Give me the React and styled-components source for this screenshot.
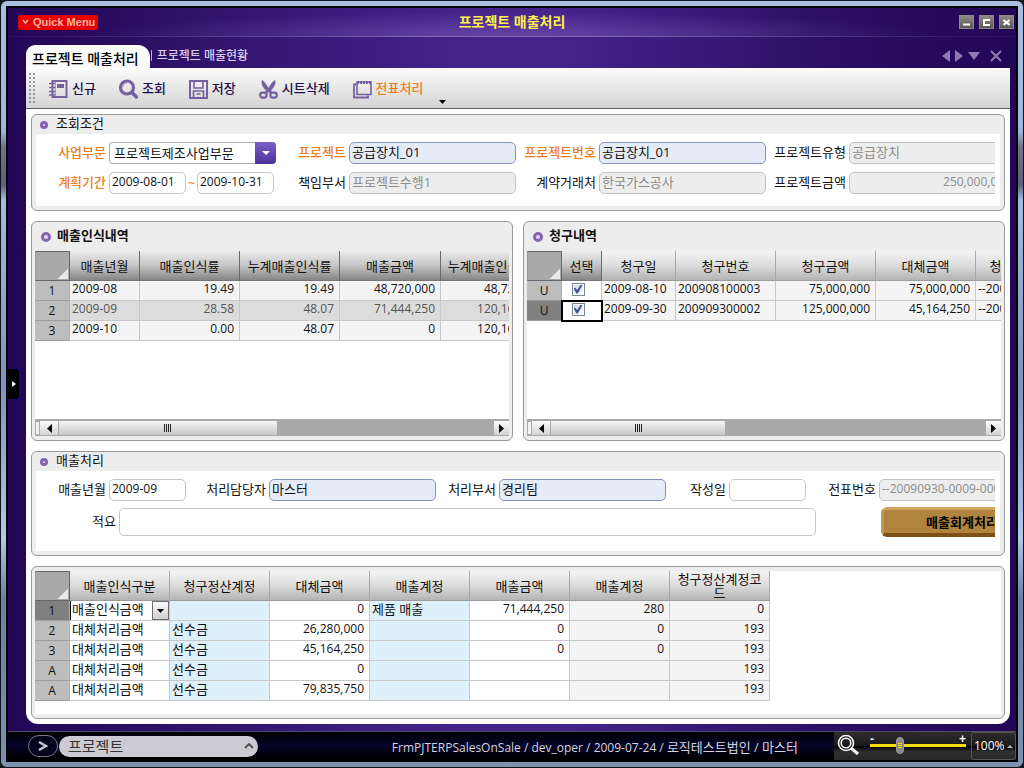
import React from "react"
import styled, { createGlobalStyle } from "styled-components"

const GlobalStyle = createGlobalStyle`
  * {
    box-sizing: border-box;
  }
  body {
    margin: 0;
    background: #10151f;
    color: #111;
    font: 13px/16px "Open Sans", "Noto Sans CJK KR", sans-serif;
  }
  button, input, select {
    font: inherit;
    color: inherit;
  }
`

/* window frame */

const Frame = styled.div`
  min-height: 100vh;
  padding: 1px;
  display: flex;
`

const Glass = styled.div`
  flex: 1;
  min-width: 0;
  display: flex;
  padding: 5px;
  border-radius: 6px;
  background: linear-gradient(#a9bfe0 0, #9fb6da 17%, #6f7486 19%, #5b5f78 24%, #a4bbdd 26%, #7f93b6 50%, #b4c8e4 70%, #6c7f9c 78%, #7d92ae 100%);
`

const Window = styled.div`
  flex: 1;
  min-width: 0;
  display: flex;
  flex-direction: column;
  border: 2px solid #05040c;
  background: linear-gradient(90deg, #230656, #2d1066 15%, #45238a 45%, #45238a 55%, #2d1066 80%, #230656);
`

const TitleBar = styled.header`
  height: 29px;
  padding: 0 2px;
  display: grid;
  grid-template-columns: 1fr auto 1fr;
  align-items: center;
  border-bottom: 1px solid #6a4da0;
  border-image: linear-gradient(90deg, #2a0d62, #8068b4 40%, #8068b4 60%, #2a0d62) 1;
  background: radial-gradient(ellipse 420px 24px at 50% 100%, rgba(130, 100, 190, 0.5), transparent);
`

const Title = styled.h1`
  margin: 0;
  font-size: 14px;
  line-height: 20px;
  color: #fff04a;
`

const QuickMenu = styled.button`
  justify-self: start;
  height: 15px;
  margin-left: 8px;
  padding: 0 3px 0 4px;
  display: flex;
  align-items: center;
  gap: 4px;
  border: 0;
  border-radius: 2px;
  background: #e60000;
  color: #ffb4a0;
  font: bold 11px/15px "Liberation Sans", sans-serif;
`

const WindowButtons = styled.div`
  justify-self: end;
  display: flex;
  gap: 5px;
`

const WindowButton = styled.button`
  width: 15px;
  height: 14px;
  padding: 0;
  display: flex;
  align-items: center;
  justify-content: center;
  border: 1px solid #8c8a80;
  background: linear-gradient(#8a8880, #5c5a56);
`

const Body = styled.div`
  flex: 1;
  display: flex;
`

const Gutter = styled.div`
  width: ${props => props.$width}px;
  flex: none;
  display: flex;
  align-items: center;
`

const SideHandle = styled.button`
  width: 11px;
  height: 30px;
  padding: 0 0 0 4px;
  border: 0;
  border-radius: 0 4px 4px 0;
  background: #000;
  display: flex;
  align-items: center;
`

const Main = styled.main`
  flex: 1;
  min-width: 0;
  display: flex;
  flex-direction: column;
  margin-bottom: 7px;
`

/* document tabs */

const TabBar = styled.nav`
  height: 31px;
  padding-right: 8px;
  display: flex;
  align-items: flex-end;
`

const Tab = styled.button`
  height: ${props => (props.$active ? 23 : 24)}px;
  padding: ${props => (props.$active ? "4px 11px 0 6px" : "0 6px 0 4px")};
  border: 0;
  border-radius: ${props => (props.$active ? "9px 12px 0 0" : "0")};
  background: ${props => (props.$active ? "#fafafa" : "none")};
  color: ${props => (props.$active ? "#000" : "#d8cdf0")};
  font-size: ${props => (props.$active ? 14 : 12)}px;
  font-weight: 500;
  line-height: 18px;
`

const TabDivider = styled.span`
  width: 1px;
  height: 11px;
  margin: 0 1px 7px;
  background: #b9a8de;
`

const TabTools = styled.div`
  margin-left: auto;
  height: 24px;
  padding-bottom: 1px;
  display: flex;
  align-items: center;
  gap: 5px;
  color: #8f7bb5;
`

const IconButton = styled.button`
  padding: 0;
  border: 0;
  background: none;
  display: flex;
  color: inherit;
  margin-left: ${props => props.$space || 0}px;
`

const Sheet = styled.div`
  flex: 1;
  display: flex;
  flex-direction: column;
  border-radius: 0 0 12px 12px;
  background: #fff;
`

const Toolbar = styled.div`
  height: 41px;
  padding-left: 3px;
  display: flex;
  align-items: center;
  gap: 22px;
  border-top: 1px solid #fff;
  border-bottom: 1px solid #5f5f5f;
  background: linear-gradient(#fafafa, #d4d4d4);
`

const Grip = styled.span`
  width: 7px;
  height: 31px;
  margin-right: -10px;
  background: radial-gradient(circle at 1px 1px, #999 1px, transparent 1px) 0 0 / 4px 4px;
`

const ToolButton = styled.button`
  height: 26px;
  padding: 0;
  display: flex;
  align-items: center;
  gap: 4px;
  border: 0;
  background: none;
  color: ${props => (props.$accent ? "#ee7d1b" : "#1d0f4d")};
  font-weight: 500;
  line-height: 20px;

  > span {
    padding-bottom: 2px;
  }

  > svg {
    color: #75609f;
  }
`

const MoreButton = styled.button`
  align-self: flex-end;
  padding: 0 0 4px;
  margin-left: -6px;
  border: 0;
  background: none;
  display: flex;
`

const Content = styled.div`
  flex: 1;
  padding: 5px;
  display: flex;
  flex-direction: column;
  gap: 10px;
`

/* panels */

const Panel = styled.section`
  min-width: 0;
  min-height: ${props => props.$minHeight || 0}px;
  display: flex;
  flex-direction: column;
  border: 1px solid #999;
  border-radius: 6px;
  background: #ededed;
`

const PanelHeader = styled.h2`
  margin: 0;
  height: ${props => (props.$tall ? 29 : 19)}px;
  padding-left: ${props => (props.$tall ? 9 : 8)}px;
  display: flex;
  align-items: center;
  gap: 6px;
  font-size: 13px;
  font-weight: ${props => (props.$tall ? 600 : 400)};

  > span:last-child {
    padding-bottom: 4px;
  }
`

const Ring = styled.span`
  width: ${props => props.$size}px;
  height: ${props => props.$size}px;
  margin-right: ${props => 10 - props.$size}px;
  border: 3px solid #8464b0;
  border-radius: 50%;
  background: #e6dcf4;
`

const PanelBody = styled.div`
  margin: 0 4px 4px;
  padding: 8px 5px ${props => props.$bottom}px;
  background: #fff;
`

const Form = styled.form`
  overflow: hidden;
  display: flex;
  flex-direction: column;
  gap: ${props => props.$gap}px;
`

const FormRow = styled.div`
  display: grid;
  grid-template-columns: ${props => props.$columns};
  column-gap: 3px;
  align-items: center;
`

const Label = styled.label`
  padding-bottom: 2px;
  text-align: right;
  white-space: nowrap;
  color: ${props => (props.$required ? "#ee7d1b" : "#111")};
  font-weight: ${props => (props.$required ? 500 : 400)};
`

const tones = {
  plain: { background: "#fff", border: "#c4c4cc", color: "#111" },
  lookup: { background: "#e6ebf8", border: "#8592bd", color: "#111" },
  locked: { background: "#ededed", border: "#c2c2c2", color: "#8c8c8c" },
}

const TextInput = styled.input`
  width: 100%;
  min-width: 0;
  height: ${props => (props.$tall ? 28 : 22)}px;
  padding: 0 4px 3px 2px;
  border: 1px solid ${props => tones[props.$tone || "plain"].border};
  border-radius: 5px;
  outline: 0;
  background: ${props => tones[props.$tone || "plain"].background};
  color: ${props => tones[props.$tone || "plain"].color};
  font-size: ${props => (props.$numeric ? 12 : 13)}px;
  text-align: ${props => props.$align || "left"};
`

const Period = styled.div`
  display: grid;
  grid-template-columns: 77px 11px 77px;
  align-items: center;
  color: #ee7d1b;
  text-align: center;
`

const SelectBox = styled.div`
  height: 22px;
  display: grid;
  grid-template-columns: 1fr 21px;
  border: 1px solid #a9a9b8;
  border-right: 0;
  border-radius: 4px;

  > select {
    grid-area: 1 / 1 / 2 / 3;
    min-width: 0;
    padding: 0 0 0 4px;
    appearance: none;
    border: 0;
    outline: 0;
    background: none;
    line-height: 20px;
  }

  > span {
    grid-area: 1 / 2;
    margin: -1px 0;
    pointer-events: none;
    display: flex;
    align-items: center;
    justify-content: center;
    border-radius: 0 4px 4px 0;
    background: linear-gradient(#7a5fc4, #4d329c);
  }
`

const PostButton = styled.button`
  width: 160px;
  height: 30px;
  margin-left: 62px;
  padding: 0;
  border: 1px solid #9a6f2c;
  border-top: 3px solid #d3a25c;
  border-bottom: 4px solid #7d5216;
  border-left: 3px solid #c8964e;
  border-radius: 6px;
  background: #b0843f;
  color: #000;
  font-weight: 600;
`

const Split = styled.div`
  flex: 1 0 220px;
  display: grid;
  grid-template-columns: 1fr 1fr;
  gap: 10px;
`

/* grids */

const GridBox = styled.div`
  flex: 1;
  min-width: 0;
  margin: ${props => (props.$top || 0)}px 3px 4px;
  display: flex;
  flex-direction: column;
  overflow: hidden;
  background: #fff;
`

const GridScroll = styled.div`
  flex: 1;
  overflow: hidden;
`

const Table = styled.table`
  width: ${props => props.$width}px;
  table-layout: fixed;
  border-collapse: separate;
  border-spacing: 0;
`

const HeadCell = styled.th`
  height: 30px;
  padding: ${props => (props.$wrap ? "0 6px" : "0")};
  border-right: 1px solid ${props => (props.$dark ? "#6c6c6c" : "#a8a8a8")};
  border-bottom: 1px solid ${props => (props.$dark ? "#777" : "#9c9c9c")};
  background: ${props => (props.$dark
    ? "linear-gradient(#ececec, #c4c4c4 50%, #868686)"
    : "linear-gradient(#f4f4f4, #dcdcdc 50%, #b4b4b4)")};
  font-weight: 400;
  line-height: ${props => (props.$wrap ? 14 : 16)}px;
  white-space: ${props => (props.$wrap ? "normal" : "nowrap")};
  word-break: break-all;
`

const CornerCell = styled.th`
  height: 30px;
  padding: 0;
  border: 1px solid #666;
  border-left-color: #999;
  background: linear-gradient(135deg, #a9a9a9 50%, #e8e8e8 51%) right 1px bottom 1px / 11px 11px no-repeat, #a9a9a9;
`

const RowHead = styled.th`
  height: 20px;
  padding: 0;
  border-right: 1px solid #b0b0b0;
  border-bottom: 1px solid #9c9c9c;
  background: ${props => (props.$current ? "#808080" : "#bdbdbd")};
  font-size: 12px;
  font-weight: 400;
`

const fills = {
  gray: "#f4f4f4",
  selected: "#dcdcdc",
  blue: "#def0fa",
  white: "#fff",
}

const Cell = styled.td`
  height: 20px;
  padding: ${props => (props.$flush ? "0" : "0 5px 3px 2px")};
  border-right: 1px solid #c8c8c8;
  border-bottom: 1px solid #c8c8c8;
  background: ${props => fills[props.$fill || "gray"]};
  color: ${props => (props.$fill === "selected" ? "#555" : "#111")};
  font-size: ${props => (props.$text ? 13 : 12)}px;
  text-align: ${props => props.$align || "left"};
  white-space: nowrap;
  overflow: hidden;
  ${props => props.$focus && `
    outline: 2px solid #000;
    outline-offset: -1px;
  `}
`

const CheckBox = styled.input`
  appearance: none;
  width: 13px;
  height: 13px;
  margin: 0 7px 0 0;
  display: inline-flex;
  vertical-align: top;
  border: 1px solid #7b8594;
  background: linear-gradient(135deg, #cdd3dc, #fff);
  box-shadow: inset 0 0 0 1px #fff;

  &:checked::after {
    content: "";
    width: 9px;
    height: 9px;
    margin: 1px;
    background: #43539c;
    clip-path: polygon(0 45%, 20% 35%, 40% 62%, 80% 0, 100% 5%, 48% 100%, 34% 100%);
  }
`

const CellSelect = styled.div`
  height: 19px;
  display: grid;
  grid-template-columns: 1fr 17px;
  border-left: 1px solid #000;

  > select {
    grid-area: 1 / 1 / 2 / 3;
    min-width: 0;
    padding: 0 0 3px 1px;
    appearance: none;
    border: 0;
    outline: 0;
    background: none;
    line-height: 16px;
  }

  > span {
    grid-area: 1 / 2;
    pointer-events: none;
    display: flex;
    align-items: center;
    justify-content: center;
    border: 1px solid #6d6d6d;
    background: linear-gradient(#fafafa, #cfcfcf);
  }
`

const ScrollBar = styled.div`
  height: 17px;
  display: flex;
  border-top: 2px solid #a8a8a8;
  border-bottom: 1px solid #a8a8a8;
  background: #a9a9a9;
`

const SplitGrip = styled.span`
  width: 5px;
  flex: none;
  border: 1px solid #aaa;
  background: #f2f2f2;
`

const ScrollArrow = styled.button`
  width: ${props => props.$width}px;
  padding: 0;
  flex: none;
  display: flex;
  align-items: center;
  justify-content: center;
  border: 0;
  background: linear-gradient(#fcfcfc, #d2d2d2);
`

const ScrollTrack = styled.div`
  flex: 1;
  padding-left: 1px;
  display: flex;
`

const ScrollThumb = styled.div`
  width: ${props => props.$size}%;
  display: flex;
  align-items: center;
  justify-content: center;
  background: linear-gradient(#f4f4f4, #c8c8c8);
`

const ThumbGrip = styled.span`
  width: 7px;
  height: 8px;
  background: repeating-linear-gradient(90deg, #222 0 1px, transparent 1px 2px);
`

/* status bar */

const StatusBar = styled.footer`
  height: 29px;
  padding-left: 20px;
  display: flex;
  align-items: center;
  border-top: 1px solid #4d4d66;
  background: linear-gradient(#000, #05042a 50%, #000 90%);
`

const RoundButton = styled.button`
  width: 30px;
  height: 22px;
  padding: 0;
  display: flex;
  align-items: center;
  justify-content: center;
  border: 1px solid #77778a;
  border-radius: 11px;
  background: #05041c;
`

const ModuleButton = styled.button`
  width: 199px;
  height: 21px;
  margin-left: 1px;
  padding: 0 4px 0 9px;
  display: flex;
  align-items: center;
  justify-content: space-between;
  border: 0;
  border-radius: 11px;
  background: #cbcbd1;
  color: #333;
  font-size: 15px;
  line-height: 20px;
`

const StatusText = styled.p`
  margin: 3px 36px 0 auto;
  color: #d4d4dc;
  font-size: 12px;
  white-space: nowrap;

  > span {
    font-size: 13px;
  }
`

const ZoomArea = styled.div`
  height: 28px;
  padding-left: 2px;
  display: flex;
  align-items: center;
  background: linear-gradient(#2c2c2c, #1c1c1c 48%, #000 50%, #2e2e2e 70%, #2a2a2a);
`

const ZoomSlider = styled.div`
  width: 96px;
  margin: 0 5px 2px 10px;
  display: grid;
  grid-template-columns: 1fr 1fr;
  color: #fff;
  font: bold 12px/6px "Liberation Sans", sans-serif;

  > span:nth-child(2) {
    text-align: right;
  }

  > input {
    grid-column: 1 / 3;
    width: 96px;
    height: 17px;
    margin: -5px 0 0;
    appearance: none;
    background: linear-gradient(#f5dc00, #f5dc00) center / 100% 3px no-repeat;
  }

  > input::-webkit-slider-thumb {
    appearance: none;
    width: 8px;
    height: 17px;
    border: 1px solid #999;
    border-radius: 4px;
    background: repeating-linear-gradient(#f5dc00 0 1px, transparent 1px 2px) center / 4px 5px no-repeat, #8a8a8a;
  }
`

const ZoomValue = styled.button`
  width: 45px;
  height: 28px;
  padding: 0 2px;
  display: flex;
  align-items: center;
  justify-content: space-between;
  border: 1px solid #565656;
  border-radius: 3px;
  background: none;
  color: #fff;
  font-size: 12px;
`

const icons = {
  create: (
    <g fill="none" stroke="currentColor">
      <path d="M4.5 2h14v16h-14z" strokeWidth="2" />
      <path d="M9 5h7v4H9z" fill="currentColor" stroke="none" />
      <path d="M1 4.5h6M1 8.5h6M1 12.5h6M1 16h6" strokeWidth="1.6" />
      <path d="M7.5 2v16" strokeWidth="1" opacity="0.6" />
    </g>
  ),
  search: (
    <g fill="none" stroke="currentColor">
      <circle cx="9" cy="8.5" r="6.5" strokeWidth="3.2" />
      <path d="M13.5 13l6 6" strokeWidth="3.6" />
      <path d="M5 8a4 4 0 0 1 4-4" stroke="#b7a7d6" strokeWidth="1" />
    </g>
  ),
  save: (
    <g fill="none" stroke="currentColor">
      <path d="M2 2h17v17H2z" strokeWidth="2" />
      <path d="M6 2.5V9h9V2.5M5.5 18v-6h10v6M8.5 15h4" strokeWidth="1.6" />
    </g>
  ),
  cut: (
    <g>
      <path
        d="M4 1c2 1 5 5 6.5 8C12 6 15 2 17 1c1.5 3-.5 7-4 10.500l2 2.500-2.500 1-2-2-2 2L6 14l2-2.500C4.500 8 2.500 4 4 1z"
        fill="currentColor"
      />
      <g fill="none" stroke="currentColor" strokeWidth="2.2">
        <rect x="2.2" y="13.6" width="6.4" height="5" rx="2.3" />
        <rect x="12.4" y="13.6" width="6.4" height="5" rx="2.3" />
      </g>
    </g>
  ),
  slip: (
    <g fill="none" stroke="currentColor">
      <path d="M5 3h14v12.5H5z" strokeWidth="1.6" />
      <path d="M4 5.5H2v13h14v-2" strokeWidth="1.8" />
      <path d="M5 3.5h14" strokeWidth="3" strokeDasharray="2 1" />
    </g>
  ),
}

const ToolIcon = ({ name }) => (
  <svg width="20" height="20" viewBox="0 0 20 20" aria-hidden="true">
    {icons[name]}
  </svg>
)

const Triangle = ({ points, width, height, color = "currentColor" }) => (
  <svg width={width} height={height} aria-hidden="true">
    <polygon points={points} fill={color} />
  </svg>
)

const Stroke = ({ d, width, height, color, weight = 2 }) => (
  <svg width={width} height={height} aria-hidden="true">
    <path d={d} fill="none" stroke={color} strokeWidth={weight} />
  </svg>
)

const tools = [
  { icon: "create", label: "신규" },
  { icon: "search", label: "조회" },
  { icon: "save", label: "저장" },
  { icon: "cut", label: "시트삭제" },
  { icon: "slip", label: "전표처리", accent: true },
]

const searchColumns = "65px 167px 67px 167px 77px 167px 77px minmax(167px, 1fr)"

const revenueGrid = {
  columns: [
    { title: "매출년월", width: 70 },
    { title: "매출인식률", width: 100, align: "right" },
    { title: "누계매출인식률", width: 100, align: "right" },
    { title: "매출금액", width: 101, align: "right" },
    { title: "누계매출인식금액", width: 110, align: "right" },
  ],
  rows: [
    ["2009-08", "19.49", "19.49", "48,720,000", "48,720,000"],
    ["2009-09", "28.58", "48.07", "71,444,250", "120,164,250"],
    ["2009-10", "0.00", "48.07", "0", "120,164,250"],
  ],
}

const billingGrid = {
  columns: [
    { title: "청구일", width: 74 },
    { title: "청구번호", width: 100 },
    { title: "청구금액", width: 100, align: "right" },
    { title: "대체금액", width: 100, align: "right" },
    { title: "청구전표번호", width: 100 },
  ],
  rows: [
    ["2009-08-10", "200908100003", "75,000,000", "75,000,000", "--20090810"],
    ["2009-09-30", "200909300002", "125,000,000", "45,164,250", "--20090930"],
  ],
}

const entryGrid = {
  columns: [
    { title: "매출인식구분", fill: "white", text: true },
    { title: "청구정산계정", fill: "blue", text: true },
    { title: "대체금액", fill: "white", align: "right" },
    { title: "매출계정", fill: "blue", text: true },
    { title: "매출금액", fill: "white", align: "right" },
    { title: "매출계정", fill: "gray", align: "right" },
    { title: "청구정산계정코드", fill: "gray", align: "right", wrap: true },
  ],
  rows: [
    { head: "1", cells: ["매출인식금액", "", "0", "제품 매출", "71,444,250", "280", "0"] },
    { head: "2", cells: ["대체처리금액", "선수금", "26,280,000", "", "0", "0", "193"] },
    { head: "3", cells: ["대체처리금액", "선수금", "45,164,250", "", "0", "0", "193"] },
    { head: "A", cells: ["대체처리금액", "선수금", "0", "", "", "", "193"] },
    { head: "A", cells: ["대체처리금액", "선수금", "79,835,750", "", "", "", "193"] },
  ],
}

const Heading = ({ tall, children }) => (
  <PanelHeader $tall={tall}>
    <Ring $size={tall ? 10 : 8} />
    <span>{children}</span>
  </PanelHeader>
)

const Field = ({ id, label, required, ...input }) => (
  <>
    <Label htmlFor={id} $required={required}>{label}</Label>
    <TextInput id={id} readOnly={input.$tone === "locked"} {...input} />
  </>
)

const HorizontalScroll = ({ size, end }) => (
  <ScrollBar>
    <SplitGrip />
    <ScrollArrow $width={18} aria-label="왼쪽으로">
      <Triangle width={5} height={9} points="5,0 5,9 0,4.5" color="#000" />
    </ScrollArrow>
    <ScrollTrack>
      <ScrollThumb $size={size}><ThumbGrip /></ScrollThumb>
    </ScrollTrack>
    <ScrollArrow $width={end} aria-label="오른쪽으로">
      <Triangle width={5} height={9} points="0,0 5,4.5 0,9" color="#000" />
    </ScrollArrow>
  </ScrollBar>
)

const SearchPanel = () => (
  <Panel>
    <Heading>조회조건</Heading>
    <PanelBody $bottom={12}>
      <Form $gap={8}>
        <FormRow $columns={searchColumns}>
          <Label htmlFor="division" $required>사업부문</Label>
          <SelectBox>
            <select id="division" defaultValue="mfg">
              <option value="mfg">프로젝트제조사업부문</option>
            </select>
            <span><Triangle width={8} height={4} points="0,0 8,0 4,4" color="#fff" /></span>
          </SelectBox>
          <Field id="project" label="프로젝트" required $tone="lookup" defaultValue="공급장치_01" />
          <Field id="projectNo" label="프로젝트번호" required $tone="lookup" defaultValue="공급장치_01" />
          <Field id="projectType" label="프로젝트유형" $tone="locked" defaultValue="공급장치" />
        </FormRow>
        <FormRow $columns={searchColumns}>
          <Label htmlFor="from" $required>계획기간</Label>
          <Period>
            <TextInput id="from" $numeric defaultValue="2009-08-01" />
            <span>~</span>
            <TextInput id="to" $numeric aria-label="계획기간 종료" defaultValue="2009-10-31" />
          </Period>
          <Field id="dept" label="책임부서" $tone="locked" defaultValue="프로젝트수행1" />
          <Field id="client" label="계약거래처" $tone="locked" defaultValue="한국가스공사" />
          <Field id="amount" label="프로젝트금액" $tone="locked" $numeric $align="right" defaultValue="250,000,000" />
        </FormRow>
      </Form>
    </PanelBody>
  </Panel>
)

const RevenuePanel = () => (
  <Panel>
    <Heading tall>매출인식내역</Heading>
    <GridBox>
      <GridScroll>
        <Table $width={516}>
          <colgroup>
            <col width="35" />
            {revenueGrid.columns.map(col => <col key={col.title} width={col.width} />)}
          </colgroup>
          <thead>
            <tr>
              <CornerCell />
              {revenueGrid.columns.map(col => <HeadCell key={col.title} $dark>{col.title}</HeadCell>)}
            </tr>
          </thead>
          <tbody>
            {revenueGrid.rows.map((row, i) => (
              <tr key={row[0]}>
                <RowHead>{i + 1}</RowHead>
                {row.map((value, c) => (
                  <Cell key={c} $fill={i === 1 ? "selected" : "gray"} $align={revenueGrid.columns[c].align}>
                    {value}
                  </Cell>
                ))}
              </tr>
            ))}
          </tbody>
        </Table>
      </GridScroll>
      <HorizontalScroll size={50} end={15} />
    </GridBox>
  </Panel>
)

const BillingPanel = () => (
  <Panel>
    <Heading tall>청구내역</Heading>
    <GridBox>
      <GridScroll>
        <Table $width={549}>
          <colgroup>
            <col width="35" />
            <col width="40" />
            {billingGrid.columns.map(col => <col key={col.title} width={col.width} />)}
          </colgroup>
          <thead>
            <tr>
              <CornerCell />
              <HeadCell $dark>선택</HeadCell>
              {billingGrid.columns.map(col => <HeadCell key={col.title}>{col.title}</HeadCell>)}
            </tr>
          </thead>
          <tbody>
            {billingGrid.rows.map((row, i) => (
              <tr key={row[1]}>
                <RowHead $current={i === 1}>U</RowHead>
                <Cell $flush $fill="white" $align="center" $focus={i === 1}>
                  <CheckBox type="checkbox" defaultChecked aria-label={`${row[0]} 선택`} />
                </Cell>
                {row.map((value, c) => (
                  <Cell key={c} $align={billingGrid.columns[c].align}>{value}</Cell>
                ))}
              </tr>
            ))}
          </tbody>
        </Table>
      </GridScroll>
      <HorizontalScroll size={40} end={15} />
    </GridBox>
  </Panel>
)

const ProcessPanel = () => (
  <Panel>
    <Heading>매출처리</Heading>
    <PanelBody $bottom={14}>
      <Form $gap={6}>
        <FormRow $columns="65px 77px 77px 167px 57px 167px 57px 77px 67px minmax(167px, 1fr)">
          <Field id="month" label="매출년월" $numeric defaultValue="2009-09" />
          <Field id="owner" label="처리담당자" $tone="lookup" defaultValue="마스터" />
          <Field id="ownerDept" label="처리부서" $tone="lookup" defaultValue="경리팀" />
          <Field id="written" label="작성일" $numeric defaultValue="" />
          <Field id="slipNo" label="전표번호" $tone="locked" $numeric defaultValue="--20090930-0009-0001" />
        </FormRow>
        <FormRow $columns="75px minmax(697px, 1fr) 222px">
          <Field id="memo" label="적요" $tall defaultValue="" />
          <PostButton type="button">매출회계처리</PostButton>
        </FormRow>
      </Form>
    </PanelBody>
  </Panel>
)

const EntryPanel = () => (
  <Panel $minHeight={153}>
    <GridBox $top={4}>
      <GridScroll>
        <Table $width={735}>
          <colgroup>
            <col width="35" />
            {entryGrid.columns.map((col, i) => <col key={i} width="100" />)}
          </colgroup>
          <thead>
            <tr>
              <CornerCell />
              {entryGrid.columns.map((col, i) => <HeadCell key={i} $wrap={col.wrap}>{col.title}</HeadCell>)}
            </tr>
          </thead>
          <tbody>
            {entryGrid.rows.map((row, i) => (
              <tr key={i}>
                <RowHead $current={i === 0}>{row.head}</RowHead>
                {row.cells.map((value, c) => {
                  const col = entryGrid.columns[c]
                  if (i === 0 && c === 0) {
                    return (
                      <Cell key={c} $flush $text $fill={col.fill}>
                        <CellSelect>
                          <select aria-label={col.title} defaultValue={value}>
                            <option>{value}</option>
                          </select>
                          <span><Triangle width={7} height={4} points="0,0 7,0 3.5,4" color="#000" /></span>
                        </CellSelect>
                      </Cell>
                    )
                  }
                  return (
                    <Cell key={c} $fill={col.fill} $align={col.align} $text={col.text}>{value}</Cell>
                  )
                })}
              </tr>
            ))}
          </tbody>
        </Table>
      </GridScroll>
    </GridBox>
  </Panel>
)

const App = () => (
  <Frame>
    <GlobalStyle />
    <Glass>
      <Window>
        <TitleBar>
          <QuickMenu>
            <Stroke width={7} height={6} d="M1 1l2.5 3L6 1" color="#ffb4a0" weight={1.5} />
            Quick Menu
          </QuickMenu>
          <Title>프로젝트 매출처리</Title>
          <WindowButtons>
            <WindowButton aria-label="최소화">
              <Stroke width={7} height={7} d="M0 5.5h7" color="#fff" />
            </WindowButton>
            <WindowButton aria-label="최대화">
              <Stroke width={7} height={7} d="M7 1H1v5h6" color="#fff" />
            </WindowButton>
            <WindowButton aria-label="닫기">
              <Stroke width={7} height={7} d="M0.5 1l6 5M6.5 1l-6 5" color="#fff" />
            </WindowButton>
          </WindowButtons>
        </TitleBar>

        <Body>
          <Gutter $width={18}>
            <SideHandle aria-label="메뉴 열기">
              <Triangle width={4} height={6} points="0,0 4,3 0,6" color="#fff" />
            </SideHandle>
          </Gutter>
          <Main>
            <TabBar>
              <Tab $active>프로젝트 매출처리</Tab>
              <TabDivider />
              <Tab>프로젝트 매출현황</Tab>
              <TabTools>
                <IconButton aria-label="이전 탭">
                  <Triangle width={8} height={12} points="8,0 8,12 0,6" />
                </IconButton>
                <IconButton aria-label="다음 탭">
                  <Triangle width={8} height={12} points="0,0 8,6 0,12" />
                </IconButton>
                <IconButton aria-label="탭 목록">
                  <Triangle width={12} height={8} points="0,0 12,0 6,8" />
                </IconButton>
                <IconButton aria-label="탭 닫기" $space={5}>
                  <Stroke width={12} height={12} d="M1 1l10 10M11 1L1 11" color="currentColor" />
                </IconButton>
              </TabTools>
            </TabBar>

            <Sheet>
              <Toolbar>
                <Grip />
                {tools.map(tool => (
                  <ToolButton key={tool.icon} $accent={tool.accent}>
                    <ToolIcon name={tool.icon} />
                    <span>{tool.label}</span>
                  </ToolButton>
                ))}
                <MoreButton aria-label="더보기">
                  <Triangle width={7} height={4} points="0,0 7,0 3.5,4" color="#000" />
                </MoreButton>
              </Toolbar>

              <Content>
                <SearchPanel />
                <Split>
                  <RevenuePanel />
                  <BillingPanel />
                </Split>
                <ProcessPanel />
                <EntryPanel />
              </Content>
            </Sheet>
          </Main>
          <Gutter $width={6} />
        </Body>

        <StatusBar>
          <RoundButton aria-label="펼치기">
            <Stroke width={10} height={10} d="M1 1l7 4-7 4" color="#c4c4cc" weight={2.4} />
          </RoundButton>
          <ModuleButton>
            프로젝트
            <Stroke width={10} height={6} d="M1 5l4-4 4 4" color="#555" />
          </ModuleButton>
          <StatusText>
            FrmPJTERPSalesOnSale / dev_oper / 2009-07-24 / <span>로직테스트법인 / 마스터</span>
          </StatusText>
          <ZoomArea>
            <svg width="24" height="24" viewBox="0 0 24 24" aria-hidden="true">
              <g fill="none" stroke="#f4f4f4">
                <circle cx="10" cy="9" r="7.5" strokeWidth="1.6" />
                <circle cx="10" cy="9" r="4.8" strokeWidth="1.6" />
                <path d="M15 14l7 6" strokeWidth="3" />
              </g>
            </svg>
            <ZoomSlider>
              <span>-</span>
              <span>+</span>
              <input type="range" min="0" max="100" defaultValue="30" aria-label="확대/축소" />
            </ZoomSlider>
            <ZoomValue>
              100%
              <Triangle width={6} height={3} points="3,0 6,3 0,3" color="#bbb" />
            </ZoomValue>
          </ZoomArea>
        </StatusBar>
      </Window>
    </Glass>
  </Frame>
)

export default App
